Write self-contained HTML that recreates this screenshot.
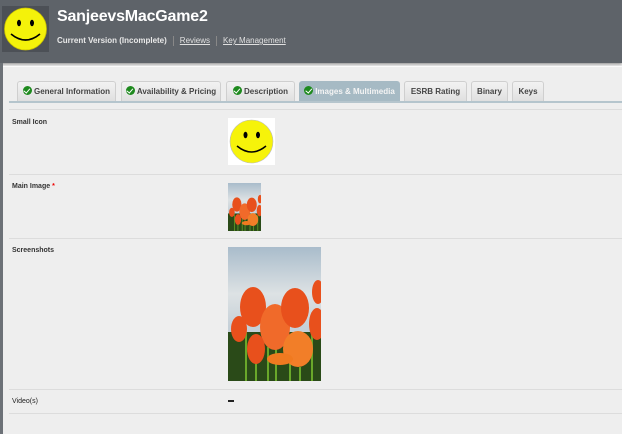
<!DOCTYPE html>
<html><head><style>
*{margin:0;padding:0;box-sizing:border-box}
body{width:622px;height:434px;overflow:hidden;background:#eeeeee;font-family:"Liberation Sans",Arial,sans-serif;position:relative}
.hdr{position:absolute;left:0;top:0;width:622px;height:63px;background:#5e6369;box-shadow:0 1px 3px #888}
.logo{position:absolute;left:2px;top:6px;width:47px;height:46px;background:#4c5056}
.title{position:absolute;left:57px;top:8px;color:#fff;font-weight:bold;font-size:16px;letter-spacing:-0.2px}
.sub{position:absolute;left:57px;top:36px;font-size:8px;color:#e8e8e8;font-weight:bold;white-space:nowrap}
.sub span.l{font-weight:normal;text-decoration:underline;color:#e0e0e0}
.sub .sep{display:inline-block;width:1px;height:10px;background:#888;vertical-align:middle;margin:0 6px}
.left{position:absolute;left:0;top:63px;width:3px;height:371px;background:#6c7177}
.panel{position:absolute;left:3px;top:66px;width:619px;height:368px;background:#eeeeee;border-top:1px solid #fafafa}
.tab{position:absolute;top:81px;height:20px;background:linear-gradient(#f2f2f2,#e0e0e0);border:1px solid #cfcfcf;border-bottom:none;border-radius:3px 3px 0 0;font-size:8px;font-weight:bold;color:#444;line-height:19px;text-align:center;white-space:nowrap}
.tab.a{background:#a6bac4;color:#f4f4f4;border-color:#a6bac4}
.ck{display:inline-block;width:9px;height:9px;border-radius:50%;background:#1e8a1e;vertical-align:-1px;margin-right:2px;position:relative}
.ck:after{content:"";position:absolute;left:2.5px;top:1px;width:2.5px;height:4.5px;border:solid #fff;border-width:0 1.5px 1.5px 0;transform:rotate(40deg)}
.tline{position:absolute;left:9px;top:101px;width:613px;height:2px;background:#b5c5cd}
.sepr{position:absolute;left:9px;width:613px;height:1px;background:#dcdcdc}
.lbl{position:absolute;left:12px;font-size:7px;font-weight:bold;color:#333}
</style></head><body>
<div class="hdr">
<div class="logo"><svg width="47" height="46" viewBox="0 0 47 46"><circle cx="23.5" cy="23" r="21" fill="#f4f20a" stroke="#c9c000" stroke-width="0.8"/><ellipse cx="17" cy="17" rx="2" ry="3.2"/><ellipse cx="30" cy="17" rx="2" ry="3.2"/><path d="M9 28 Q23.5 40 38 28" fill="none" stroke="#000" stroke-width="1.6"/></svg></div>
<div class="title">SanjeevsMacGame2</div>
<div class="sub">Current Version (Incomplete)<span class="sep"></span><span class="l">Reviews</span><span class="sep"></span><span class="l">Key Management</span></div>
</div>
<div class="left"></div>
<div class="panel"></div>
<div class="tab" style="left:17px;width:99px"><span class="ck"></span>General Information</div>
<div class="tab" style="left:121px;width:100px"><span class="ck"></span>Availability &amp; Pricing</div>
<div class="tab" style="left:226px;width:69px"><span class="ck"></span>Description</div>
<div class="tab a" style="left:299px;width:101px"><span class="ck"></span>Images &amp; Multimedia</div>
<div class="tab" style="left:404px;width:63px">ESRB Rating</div>
<div class="tab" style="left:471px;width:37px">Binary</div>
<div class="tab" style="left:512px;width:32px">Keys</div>
<div class="tline"></div>
<div class="sepr" style="top:109px"></div>
<div class="sepr" style="top:174px"></div>
<div class="sepr" style="top:238px"></div>
<div class="sepr" style="top:389px"></div>
<div class="sepr" style="top:413px"></div>
<div class="lbl" style="top:119px">Small Icon</div>
<div class="lbl" style="top:183px">Main Image <span style="color:#e00">*</span></div>
<div class="lbl" style="top:247px">Screenshots</div>
<div class="lbl" style="top:398px;font-weight:normal;color:#222">Video(s)</div>
<div style="position:absolute;left:228px;top:400px;width:6px;height:1.5px;background:#222"></div>
<svg style="position:absolute;left:228px;top:118px" width="47" height="47"><rect width="47" height="47" fill="#fff"/><circle cx="23.5" cy="23.5" r="21.5" fill="#f6f30a" stroke="#bbb" stroke-width="0.6"/><ellipse cx="17.5" cy="17" rx="2" ry="3.2"/><ellipse cx="30" cy="17" rx="2" ry="3.2"/><path d="M9 28 Q23.5 40 38 28" fill="none" stroke="#000" stroke-width="1.5"/></svg>
<svg width="0" height="0" style="position:absolute"><defs>
<linearGradient id="s" x1="0" y1="0" x2="0" y2="1"><stop offset="0" stop-color="#a9bccb"/><stop offset="0.35" stop-color="#dde2e4"/><stop offset="0.6" stop-color="#c5d0d8"/></linearGradient>
<g id="t">
<rect width="93" height="134" fill="url(#s)"/><rect y="85" width="93" height="49" fill="#2a4a18"/>
<g stroke="#6aa82a" stroke-width="2"><path d="M28 90V134M48 95V134M62 110V134M18 85V134M84 80V134M40 100V134M72 120V134"/></g>
<g fill="#e8501c"><ellipse cx="25" cy="60" rx="13" ry="20"/><ellipse cx="47" cy="80" rx="15" ry="23" fill="#f06a2a"/><ellipse cx="67" cy="61" rx="14" ry="20"/><ellipse cx="11" cy="82" rx="8" ry="13"/><ellipse cx="70" cy="102" rx="15" ry="18" fill="#f27e28"/><ellipse cx="89" cy="77" rx="8" ry="16"/><ellipse cx="28" cy="102" rx="9" ry="15"/><ellipse cx="52" cy="112" rx="13" ry="6" fill="#f07a20"/><ellipse cx="90" cy="45" rx="6" ry="12"/></g>
</g></defs></svg>
<svg style="position:absolute;left:228px;top:183px" width="33" height="48" viewBox="0 0 93 134" preserveAspectRatio="none"><use href="#t"/></svg>
<svg style="position:absolute;left:228px;top:247px" width="93" height="134" viewBox="0 0 93 134"><use href="#t"/></svg>
</body></html>
